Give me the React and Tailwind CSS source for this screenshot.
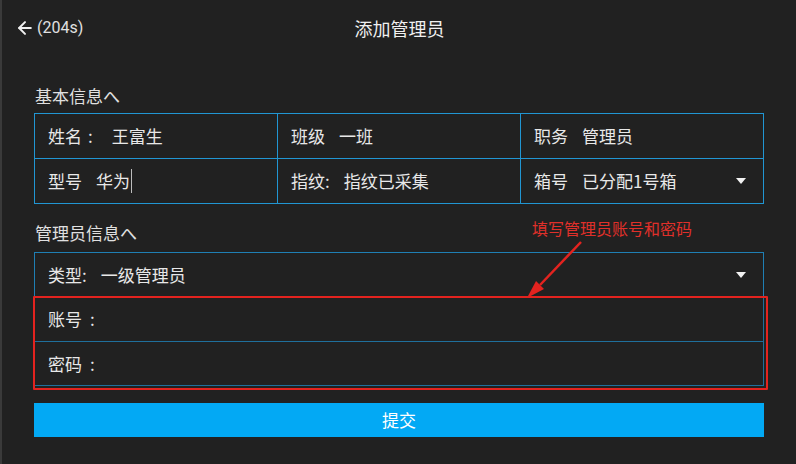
import { ArrowLeft } from 'lucide-react'

const font = { fontFamily: '"Noto Sans CJK SC", "Noto Sans", sans-serif' }

function Caret() {
  return (
    <svg width="12" height="8" viewBox="0 0 12 8" className="shrink-0">
      <polygon points="1,1 11,1 6,7" fill="#f2f2f2" />
    </svg>
  )
}

function Cell({ label, value, gap = 'gap-[14px]', caret, cursor }) {
  return (
    <div className="h-[45px] border-r border-b border-[#2196d3] flex items-center pl-[13px] pr-[16px]">
      <div className={`flex items-center flex-1 ${gap}`}>
        <span>{label}</span>
        <span className="flex items-center">
          {value}
          {cursor && <span className="inline-block w-[1px] h-[24px] bg-[#bdbdbd] ml-[1px]" />}
        </span>
      </div>
      {caret && <Caret />}
    </div>
  )
}

export default function App() {
  return (
    <div
      className="relative w-[796px] h-[464px] bg-[#212121] border-l-2 border-[#3a3a3a] text-[#e8e8e8] overflow-hidden"
      style={font}
    >
      {/* Header */}
      <div className="h-[56px] grid grid-cols-3 items-center">
        <div className="flex items-center pl-[13px] gap-[2px]">
          <ArrowLeft className="w-[20px] h-[20px] text-[#f0f0f0]" strokeWidth={2.4} />
          <span className="text-[16px] text-[#e0e0e0]" style={{ fontFamily: 'Roboto, sans-serif' }}>(204s)</span>
        </div>
        <div className="text-center text-[18px] text-[#f0f0f0] pl-[1px]">添加管理员</div>
        <div />
      </div>

      <div className="pl-[32px] pr-[32px]">
        {/* 基本信息 */}
        <div className="mt-[28px] h-[24px] leading-[24px] text-[17px] pl-[1px] text-[#e0e0e0]">基本信息へ</div>
        <div className="mt-[5px] grid grid-cols-3 border-l border-t border-[#2196d3] text-[17px]">
          <Cell label={<>姓名<span className="ml-[6px]">:</span></>} value="王富生" gap="gap-[19px]" />
          <Cell label="班级" value="一班" />
          <Cell label="职务" value="管理员" />
          <Cell label="型号" value="华为" cursor />
          <Cell label="指纹:" value="指纹已采集" />
          <Cell label="箱号" value="已分配1号箱" caret />
        </div>

        {/* 管理员信息 */}
        <div className="mt-[17px] h-[24px] leading-[24px] text-[17px] pl-[1px] text-[#e0e0e0]">管理员信息へ</div>
        <div className="mt-[7px] text-[17px]">
          <div className="h-[45px] border border-b-0 border-[#1f7fb4] flex items-center pl-[13px] pr-[16px]">
            <div className="flex-1 flex items-center gap-[14px]">
              <span>类型:</span>
              <span>一级管理员</span>
            </div>
            <Caret />
          </div>
          <div className="relative">
            <div className="h-[45px] border-x border-b border-[#1f6f9c] flex items-center pl-[13px]">账号<span className="ml-[8px]">:</span></div>
            <div className="h-[44px] border-x border-b border-[#1f6f9c] flex items-center pl-[13px]">密码<span className="ml-[8px]">:</span></div>
            <div className="absolute -top-[1px] -left-[1px] -right-[4px] -bottom-[4px] border-2 border-[#e3231f] rounded-[1px] pointer-events-none" />
          </div>
        </div>

        {/* Submit */}
        <button className="mt-[17px] w-full h-[34px] bg-[#03a9f4] text-[17px] text-white flex items-center justify-center">
          提交
        </button>
      </div>

      {/* Annotation */}
      <div className="absolute left-[530px] top-[217px] text-[16px] text-[#e0302a] leading-[22px]">填写管理员账号和密码</div>
      <svg className="absolute left-0 top-0 pointer-events-none" width="796" height="464">
        <line x1="579" y1="242" x2="538" y2="285" stroke="#e3231f" strokeWidth="2.5" />
        <polygon points="525,298 542,289 534,281" fill="#e3231f" />
      </svg>
    </div>
  )
}
